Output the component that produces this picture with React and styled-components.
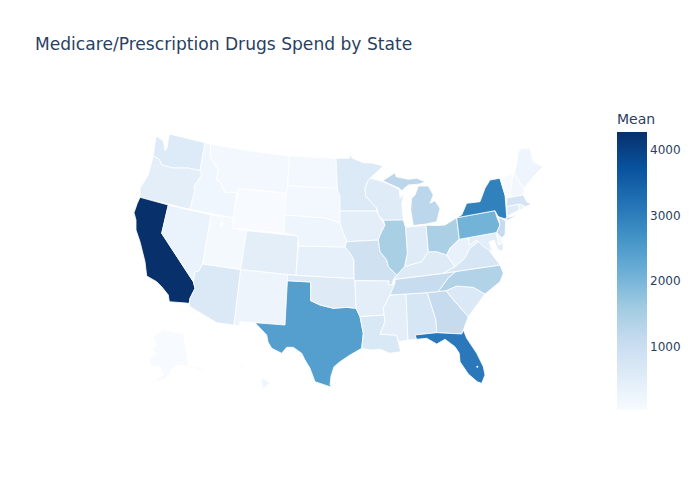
import React from 'react';
import styled, { createGlobalStyle } from 'styled-components';

const GlobalStyle = createGlobalStyle`
  html, body {
    margin: 0;
    padding: 0;
    background: #fff;
  }
`;

const states = [
  { id: 'WA', fill: '#ddeaf7', d: '156,136 163.3,140.7 165,150.7 167,148 169.3,134 205,142.7 200,170.7 188.3,168 173,168 161.7,165 159.3,159.3 153.3,156' },
  { id: 'OR', fill: '#e3eef9', d: '153.3,156 159.3,159.3 161.7,165 173,168 188.3,168 200,170.7 201.7,175 194,186.7 195,190 190,209.3 140,197.3 140,188.3 148.3,175' },
  { id: 'CA', fill: '#08306b', d: '140,197.3 168.3,205 161.7,233.3 193.3,281.7 195,288.3 190,298.3 189.3,303.3 169.3,301.7 168.3,295 161.7,286.7 156.7,281.7 146.7,276 145,261.7 140,241.7 136,230 136,220 134,212.7 137.3,203.3' },
  { id: 'NV', fill: '#eaf3fb', d: '168.3,205 211,215 202.7,264 198.3,271.7 195,271.7 193.3,281.7 161.7,233.3' },
  { id: 'ID', fill: '#f0f6fd', d: '205,142.7 210.7,144 210.7,157.3 218.3,170 216,179.3 220,181.7 225,192.3 236.7,192.3 233.3,217.7 190,209.3 195,190 194,186.7 201.7,175 200,170.7' },
  { id: 'MT', fill: '#f3f8fe', d: '210.7,144 250,151 289.3,156 287.7,185.7 286,193.3 238.3,188.3 236.7,192.3 225,192.3 220,181.7 216,179.3 218.3,170 210.7,157.3' },
  { id: 'WY', fill: '#f7fbff', d: '238.3,188.3 286,193.3 284,233.3 232,228.3' },
  { id: 'UT', fill: '#f4f9fe', d: '211,215 233.3,217.7 232,228.3 246.7,230.7 240.7,269.7 202.7,264' },
  { id: 'CO', fill: '#e3eef9', d: '246.7,230.7 298.3,236 296,275.3 240.7,269.7' },
  { id: 'AZ', fill: '#dbe9f6', d: '202.7,264 240.7,269.7 234,325 216.7,322.7 190,306.7 189.3,303.3 190,298.3 195,288.3 193.3,281.7 195,271.7 198.3,271.7' },
  { id: 'NM', fill: '#edf4fc', d: '240.7,269.7 287.5,274.7 285,325 255,322.7 240,321.7 239.3,325.7 234,325' },
  { id: 'TX', fill: '#559fcf', d: '287.4,280.7 310.7,282 310.7,300.7 320,305 333.3,308.3 346.7,307.3 356,308.3 360,316.7 363.3,333.3 361.7,348.3 350,355 340,361.7 334,366.7 331,376 330,385 331.7,387.3 315,381.7 310,368.3 305,360 301.7,353.3 293.3,347.3 286.7,347.3 281.7,353.3 271.7,348.3 268,342 266.7,335 255,322.7 285,325' },
  { id: 'OK', fill: '#deebf7', d: '287.5,274.7 296,275.3 354,278.5 355,280.7 356,308.3 346.7,307.3 333.3,308.3 320,305 310.7,300.7 310.7,282 287.4,280.7' },
  { id: 'KS', fill: '#e6f0fa', d: '298.3,246 345,247 350,253 354,260 354,278.5 296,275.3' },
  { id: 'NE', fill: '#eef5fc', d: '285,215 305,216.5 326,218 340,223 343,232 346.7,241.7 345,247 298.3,246 298.3,236 284,233.3' },
  { id: 'SD', fill: '#f3f8fe', d: '287.7,185.7 336.7,188.3 338,192 340,195 340,211 340,223 326,218 285,215 286,193.3' },
  { id: 'ND', fill: '#f3f8fe', d: '289.3,156 336,158.3 337.3,186.7 336.7,188.3 287.7,185.7' },
  { id: 'MN', fill: '#dce9f6', d: '336,158.3 349.3,158.3 350,153.3 352,158 363.3,162.7 372,163 383.3,166 371.7,176.7 368.3,180 365,188.3 366,196.7 376.7,208 376.7,211 340,211 340,195 338,192 337.3,186.7' },
  { id: 'WI', fill: '#dfebf7', d: '368.3,180 370,178.3 383.3,181.7 399.3,189.3 400,198.3 404.3,193.3 401.7,203.3 403.3,220 383.3,220.3 378.3,215 376.7,208 366,196.7 365,188.3' },
  { id: 'MIU', fill: '#bcd7eb', d: '382.7,180.7 395,172.7 396,176.7 408.3,179.3 416.7,178.3 425,181.7 420,184 408.3,185 401.7,190.7 399.3,188.3' },
  { id: 'MIL', fill: '#bcd7eb', d: '418.3,186 428.3,186 433.3,195 430,203.3 435,200.7 440,208.3 436.7,221.7 426,224 413.3,225.5 410.7,210 411.7,198.3 415,195' },
  { id: 'IA', fill: '#e3eef9', d: '340,211 376.7,211 378.3,215 385,225 380,235 378.3,240 346.7,241.7 343,232 340,223' },
  { id: 'MO', fill: '#d0e2f2', d: '346.7,241.7 378.3,240 380,251.7 386.7,260 388.3,266.7 396.7,275 393.3,280 391.7,285 388.3,285 389,281 355,280.7 354,278.5 354,260 350,253 345,247' },
  { id: 'AR', fill: '#e3eef9', d: '355,280.7 389,281 388.3,285 391.7,285 395,283.3 390,295 383.3,308.3 384,315 360,316.7 356,308.3' },
  { id: 'LA', fill: '#d9e8f5', d: '360,316.7 384,315 385,321.7 380,334.3 396.7,335 398.3,341.7 400.7,351.7 390,353.3 380,349.3 370,350 361.7,348.3 363.3,333.3' },
  { id: 'MS', fill: '#e3eef9', d: '390,295 406,294 408,340 398.3,341.7 396.7,335 380,334.3 385,321.7 384,315 383.3,308.3' },
  { id: 'AL', fill: '#d6e6f4', d: '406,294 427.3,292.7 436,320 436.7,332.7 415,335 416.7,339.3 408,340' },
  { id: 'GA', fill: '#c7dbef', d: '427.3,292.7 438.3,291.5 446,290.7 455,301.7 468.3,316.7 463.3,330 461.7,334 436.7,332.7 436,320' },
  { id: 'SC', fill: '#dbe9f6', d: '446,290.7 456.7,286 473.3,287.3 485,294 468.3,316.7 455,301.7' },
  { id: 'NC', fill: '#b2d2e8', d: '500,265 503.3,273.3 500,281.7 485,294 473.3,287.3 456.7,286 446,290.7 438.3,291.5 448,278 456,271.4' },
  { id: 'TN', fill: '#c8dcf0', d: '395,279.3 443.3,273.3 456,271.4 448,278 438.3,291.5 427.3,292.7 406,294 390,295 395,283.3' },
  { id: 'KY', fill: '#deebf7', d: '393.3,280 398.3,273.5 404.5,266.7 413,264 421.7,261.7 428.3,251.7 436.7,251.7 446.7,255 455,266.7 443.3,273.3 395,279.3' },
  { id: 'IN', fill: '#dfecf7', d: '405.5,227.3 426,225.3 428.3,251.7 421.7,261.7 413,264 404.5,266.7 407.3,253.3' },
  { id: 'IL', fill: '#a9cfe5', d: '383.3,220.3 403.3,220 405.5,227.3 407.3,253.3 404.5,266.7 398.3,273.5 396.7,275 388.3,266.7 386.7,260 380,251.7 378.3,240 380,235 385,225' },
  { id: 'OH', fill: '#abd0e6', d: '426,225.3 436.7,225.5 445,225 456.7,217.7 459.3,239.3 450,248.3 446.7,255 436.7,251.7 428.3,251.7' },
  { id: 'WV', fill: '#e9f2fb', d: '459.3,239.3 468.5,237.7 469.3,245 476.7,240 478.3,241.7 470,248.3 465,258.3 455,266.7 446.7,255 450,248.3' },
  { id: 'VA', fill: '#d6e6f4', d: '443.3,273.3 455,266.7 465,258.3 470,248.3 478.3,241.7 486.7,245 490,251.7 500,265' },
  { id: 'MD', fill: '#e1edf8', d: '468.5,237.7 496.7,232.5 498.3,244.3 503.3,243.3 503,251 498,250 494,240 489,241.7 492.3,251.7 484,247 478.3,241.7 476.7,240 469.3,245' },
  { id: 'DE', fill: '#f3f8fe', d: '496.7,232.5 499,232.3 503.3,243.3 498.3,244.3' },
  { id: 'PA', fill: '#74b3d8', d: '456.7,217.7 495,210.7 496.7,216.7 500,225 496.7,232.5 459.3,239.3' },
  { id: 'NY', fill: '#3181bd', d: '461.7,215 466.7,203.3 480,201.7 485,188.3 490,180 500,178.3 505,195 506.7,216.7 505.5,219 498.3,216.7 495,210.7 456.7,217.7' },
  { id: 'LI', fill: '#3181bd', d: '505.7,220.5 518.5,214.3 507,218.5' },
  { id: 'NJ', fill: '#c6dbef', d: '498.3,216.7 505.7,221 505,235 501.7,237.7 496.7,232.5 500,225' },
  { id: 'VT', fill: '#f7fbff', d: '500,178.3 513.3,173.3 511,186.7 510,197 506.7,198 505,195' },
  { id: 'NH', fill: '#f1f7fd', d: '513.3,173.3 514.3,173.3 524.3,190 523.3,195 510,197 511,186.7' },
  { id: 'ME', fill: '#eef5fc', d: '518.3,151.7 521.7,148.3 530,148.3 533.3,161.7 543.3,166.7 531.7,178.3 525,186.7 524.3,190 514.3,173.3 516.7,163.3' },
  { id: 'MA', fill: '#d4e4f4', d: '506.7,198 523.3,195 526.7,201.7 531.7,204.3 525,206.7 518.3,204.3 506.7,206.7' },
  { id: 'CT', fill: '#dfebf7', d: '506.7,206.7 518.3,204.3 519.5,210 507,216' },
  { id: 'RI', fill: '#eaf3fb', d: '518.3,204.3 523.3,205 524,208.3 519.5,210' },
  { id: 'FL', fill: '#2a77b9', d: '415,335 436.7,332.7 461.7,334 463.3,330 466.7,338.3 476.7,353.3 483.3,366.7 485,375 481.7,383.3 477.3,381.7 468.3,374 460,361.7 459.3,353.3 455,346.7 445,339.3 436.7,344 426.7,338.3 416.7,339.3' },
  { id: 'AK', fill: '#f7fbff', d: '163.3,330 183.3,333.3 188.3,365.7 198.3,366.7 212.7,376.7 200,370 190,366.7 176.7,365 171.7,370 166.7,377.7 146.7,385 163.3,375 160,366.7 150,366.7 149.3,358.3 156.7,353.3 150,349 156.7,345 152.7,336.7' },
  { id: 'HI', fill: '#f0f6fd', d: '260.7,380 263.3,378.3 270,383.3 263.3,389' },
  { id: 'HI2', fill: '#f7fbff', d: '239,363.5 244,367 241,368' },
  { id: 'HI3', fill: '#f7fbff', d: '252,370 257,372.5 253,372.5' },
];

// lakes sitting inside states
const lakes = [
  { cx: 221.7, cy: 224.5, rx: 1.6, ry: 3 },
  { cx: 477.3, cy: 366.7, rx: 1, ry: 1 },
];

const ticks = [4000, 3000, 2000, 1000];

const Page = styled.div`
  width: 700px;
  height: 500px;
  background: #fff;
  overflow: hidden;
  color: #2a3f5f;
  font-family: "DejaVu Sans", Verdana, sans-serif;
`;

const Title = styled.h1`
  margin: 0;
  padding: 33px 0 0 35px;
  height: 112px;
  box-sizing: border-box;
  font-size: 17.1px;
  line-height: 22px;
  font-weight: 400;
`;

const Body = styled.div`
  display: flex;
  align-items: flex-start;
`;

const MapSvg = styled.svg`
  display: block;
  width: 420px;
  height: 300px;
  margin-left: 130px;
`;

const StatePath = styled.polygon`
  stroke: #fff;
  stroke-width: 0.8;
  stroke-linejoin: round;
`;

const Legend = styled.div`
  margin-left: 67px;
`;

const LegendTitle = styled.div`
  font-size: 14px;
  line-height: 14px;
  height: 20px;
`;

const LegendRow = styled.div`
  display: flex;
`;

const ColorBar = styled.div`
  width: 30px;
  height: 278px;
  background: linear-gradient(
    to bottom,
    #08306b 0%,
    #08519c 12.5%,
    #2171b5 25%,
    #4292c6 37.5%,
    #6baed6 50%,
    #9ecae1 62.5%,
    #c6dbef 75%,
    #deebf7 87.5%,
    #f7fbff 100%
  );
`;

const Ticks = styled.div`
  display: flex;
  flex-direction: column;
  gap: 51.7px;
  padding: 11px 0 0 3px;
`;

const Tick = styled.span`
  font-size: 12px;
  line-height: 14px;
`;

export default function App() {
  return (
    <Page>
      <GlobalStyle />
      <Title>Medicare/Prescription Drugs Spend by State</Title>
      <Body>
        <MapSvg viewBox="130 112 420 300">
          {states.map((s) => (
            <StatePath key={s.id} points={s.d} fill={s.fill} />
          ))}
          {lakes.map((l, i) => (
            <ellipse key={i} cx={l.cx} cy={l.cy} rx={l.rx} ry={l.ry} fill="#fff" />
          ))}
        </MapSvg>
        <Legend>
          <LegendTitle>Mean</LegendTitle>
          <LegendRow>
            <ColorBar />
            <Ticks>
              {ticks.map((t) => (
                <Tick key={t}>{t}</Tick>
              ))}
            </Ticks>
          </LegendRow>
        </Legend>
      </Body>
    </Page>
  );
}
